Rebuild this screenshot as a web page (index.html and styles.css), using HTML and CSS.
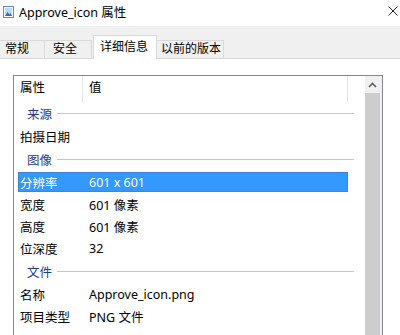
FILE: index.html
```html
<!DOCTYPE html>
<html lang="zh-CN">
<head>
    <meta charset="UTF-8">
    <title>Approve_icon 属性</title>
    <link rel="stylesheet" href="styles.css">
</head>
<body>
    <div class="window">
        <div class="title-bar">
            <svg class="title-icon" width="11" height="12" viewBox="0 0 11 12">
                <rect x="0.5" y="0.5" width="10" height="11" fill="#ffffff" stroke="#5b8fc9"/>
                <rect x="2" y="2" width="7" height="8" fill="#bcd7f2"/>
                <path d="M2 10 L4.5 6 L6.5 8.5 L7.5 7 L9 10 Z" fill="#2f6fb8"/>
            </svg>
            <span class="title-text">Approve_icon 属性</span>
            <svg class="close" width="10" height="10" viewBox="0 0 10 10">
                <path d="M0.5 0.5 L9.5 9.5 M9.5 0.5 L0.5 9.5" stroke="#222" stroke-width="1"/>
            </svg>
        </div>

        <div class="tabs">
            <div class="tab tab-general">常规</div>
            <div class="tab tab-security">安全</div>
            <div class="tab tab-details active">详细信息</div>
            <div class="tab tab-versions">以前的版本</div>
        </div>

        <div class="panel">
            <div class="list">
                <div class="list-body">
                    <div class="list-head">
                        <div class="col-name">属性</div>
                        <div class="col-value">值</div>
                        <div class="col-rest"></div>
                    </div>

                    <div class="group"><span>来源</span><i></i></div>
                    <div class="row"><div class="col-name">拍摄日期</div><div></div></div>

                    <div class="group"><span>图像</span><i></i></div>
                    <div class="row selected"><div class="col-name">分辨率</div><div>601 x 601</div></div>
                    <div class="row"><div class="col-name">宽度</div><div>601 像素</div></div>
                    <div class="row"><div class="col-name">高度</div><div>601 像素</div></div>
                    <div class="row"><div class="col-name">位深度</div><div>32</div></div>

                    <div class="group"><span>文件</span><i></i></div>
                    <div class="row"><div class="col-name">名称</div><div>Approve_icon.png</div></div>
                    <div class="row"><div class="col-name">项目类型</div><div>PNG 文件</div></div>
                </div>
                <div class="scrollbar">
                    <div class="scroll-up">
                        <svg width="9" height="6" viewBox="0 0 9 6">
                            <path d="M1 5 L4.5 1.5 L8 5" fill="none" stroke="#606060" stroke-width="1.6"/>
                        </svg>
                    </div>
                    <div class="thumb"></div>
                </div>
            </div>
        </div>
    </div>
</body>
</html>
```

FILE: styles.css
```css
html, body {
    margin: 0;
    padding: 0;
    background: #ffffff;
}
.window {
    width: 400px;
    height: 335px;
    overflow: hidden;
    font-family: "Noto Sans", "Noto Sans CJK SC", sans-serif;
    font-size: 12.5px;
    color: #000;
}
.title-bar {
    height: 26px;
    display: flex;
    align-items: center;
    background: #ffffff;
}
.title-icon {
    margin-left: 3px;
    margin-top: -2px;
}
.title-text {
    margin-left: 5px;
    font-size: 12.5px;
    margin-top: -3px;
}
.close {
    margin-left: auto;
    margin-right: 2px;
    margin-top: -5px;
}
.tabs {
    height: 32px;
    background: #f0f0f0;
    display: flex;
    align-items: flex-end;
    border-bottom: 1px solid #d9d9d9;
    font-size: 12px;
}
.tab {
    box-sizing: border-box;
    height: 18px;
    line-height: 16px;
    border: 1px solid #d9d9d9;
    border-bottom: none;
    margin-left: -1px;
    background: #f0f0f0;
}
.tab-general {
    width: 46px;
    padding-left: 5px;
}
.tab-security {
    width: 48px;
    padding-left: 8px;
}
.tab-details {
    width: 64px;
    padding-left: 6px;
}
.tab-versions {
    width: 69px;
    padding-left: 5px;
}
.tab.active {
    height: 24px;
    line-height: 22px;
    background: #ffffff;
    margin-left: 1px;
    margin-right: -1px;
    margin-bottom: -1px;
    position: relative;
}
.panel {
    height: 300px;
    background: #ffffff;
    padding: 16px 0 0 13px;
}
.list {
    width: 368px;
    height: 290px;
    border: 1px solid #828790;
    display: flex;
}
.list-body {
    flex: 1;
}
.list-head {
    height: 26px;
    display: flex;
    align-items: center;
}
.list-head .col-name {
    padding-left: 6px;
    width: 62px;
    border-right: 1px solid #e5e5e5;
    height: 26px;
    line-height: 24px;
}
.list-head .col-value {
    padding-left: 6px;
    width: 258px;
    border-right: 1px solid #e5e5e5;
    height: 26px;
    line-height: 24px;
}
.group {
    height: 23px;
    display: flex;
    align-items: center;
    padding-left: 13px;
    color: #1e3c8c;
}
.group span {
    margin-top: -1px;
}
.group i {
    flex: 1;
    height: 1px;
    background: #b9c9d7;
    margin: 0 11px 0 5px;
}
.row {
    height: 21px;
    margin: 1px 17px 1px 4px;
    display: flex;
    align-items: center;
}
.row .col-name {
    width: 69px;
    padding-left: 2px;
}
.row.selected {
    background: #3399ff;
    color: #ffffff;
    height: 20px;
    margin-bottom: 2px;
    box-shadow: inset 0 0 0 1px #3a87d6;
}
.scrollbar {
    width: 17px;
    background: #f0f0f0;
    display: flex;
    flex-direction: column;
}
.scroll-up {
    height: 17px;
    display: flex;
    align-items: center;
    justify-content: center;
    margin-right: 2px;
}
.thumb {
    flex: 1;
    background: #cdcdcd;
    margin-right: 2px;
}
```
